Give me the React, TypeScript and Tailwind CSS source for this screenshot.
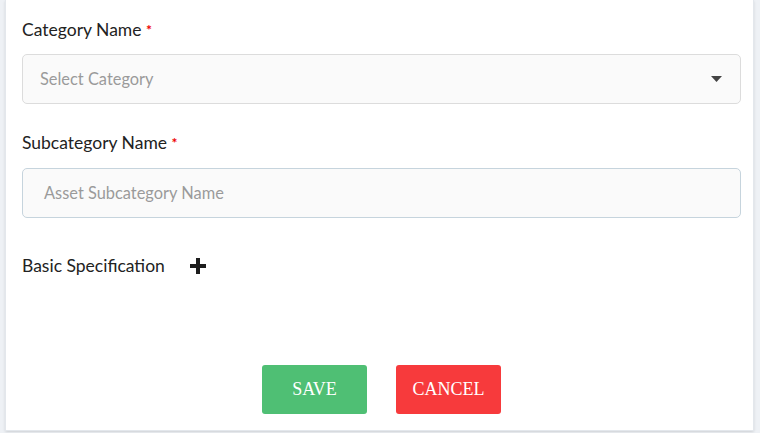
export default function App() {
  return (
    <div className="w-[760px] h-[433px] bg-[#eef1f5] pl-[5px] pr-[6px] overflow-hidden" style={{ fontFamily: "Lato, 'Noto Sans', sans-serif" }}>
      <div className="h-[431px] bg-white border border-t-0 border-[#e3e7ec] shadow-sm pl-[16px] pr-[12px] flex flex-col">
        {/* category */}
        <label className="mt-[19px] text-[17.5px] leading-[22px] text-[#222]">
          Category Name <span className="text-[#e00] text-[14px] font-bold align-top">*</span>
        </label>
        <div className="mt-[13px] h-[50px] rounded-[5px] border border-[#dcdcdc] bg-[#fafafa] flex items-center justify-between pl-[17px] pr-[18px]">
          <span className="text-[16.4px] text-[#9a9a9a]">Select Category</span>
          <svg width="11" height="6" viewBox="0 0 11 6"><path d="M0 0h11L5.5 6z" fill="#444" /></svg>
        </div>

        {/* subcategory */}
        <label className="mt-[28px] text-[17.5px] leading-[22px] text-[#222]">
          Subcategory Name <span className="text-[#e00] text-[14px] font-bold align-top">*</span>
        </label>
        <div className="mt-[14px] h-[50px] rounded-[5px] border border-[#c6d4dd] bg-[#fafafa] flex items-center pl-[21px]">
          <span className="text-[16.4px] text-[#9a9a9a]">Asset Subcategory Name</span>
        </div>

        {/* spec */}
        <div className="mt-[37px] flex items-center gap-[25px] text-[17.5px] leading-[22px] text-[#222]">
          <span>Basic Specification</span>
          <svg width="16" height="16" viewBox="0 0 16 16"><path d="M6 0h4v6h6v4h-6v6H6v-6H0V6h6z" fill="#1d1d1d" /></svg>
        </div>

        <div className="mt-[88px] flex justify-center gap-[29px]">
          <button className="w-[105px] h-[49px] rounded-[3px] bg-[#4fbf74] text-white text-[18px]" style={{ fontFamily: "'Liberation Serif', serif" }}>SAVE</button>
          <button className="w-[105px] h-[49px] rounded-[3px] bg-[#f73a3c] text-white text-[18px]" style={{ fontFamily: "'Liberation Serif', serif" }}>CANCEL</button>
        </div>
      </div>
    </div>
  );
}
